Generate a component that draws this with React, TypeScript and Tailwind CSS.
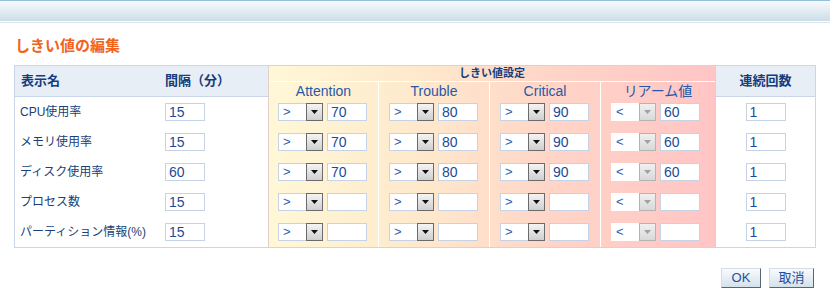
import React from 'react';

const rows = [
  { name: 'CPU使用率', interval: '15', values: ['70', '80', '90', '60'], count: '1' },
  { name: 'メモリ使用率', interval: '15', values: ['70', '80', '90', '60'], count: '1' },
  { name: 'ディスク使用率', interval: '60', values: ['70', '80', '90', '60'], count: '1' },
  { name: 'プロセス数', interval: '15', values: ['', '', '', ''], count: '1' },
  { name: 'パーティション情報(%)', interval: '15', values: ['', '', '', ''], count: '1' },
];

const levels = [
  { label: 'Attention', col: 'w-[109px] pl-[9px]', head: '-ml-[9px]', op: '>', disabled: false },
  { label: 'Trouble', col: 'w-[111px] pl-[10px] border-l border-white', head: '-ml-[10px]', op: '>', disabled: false },
  { label: 'Critical', col: 'w-[111px] pl-[10px] border-l border-white', head: '-ml-[10px]', op: '>', disabled: false },
  { label: 'リアーム値', col: 'w-[115px] pl-[10px] border-l border-white', head: '-ml-[10px]', op: '<', disabled: true },
];

function TextBox({ value }: { value: string }) {
  return (
    <div className="w-[40px] h-[18px] border border-[#c6d3e6] bg-white pl-[3px] text-[14px] leading-[16px] text-[#1d4a96]">
      {value}
    </div>
  );
}

function OpSelect({ op, disabled }: { op: string; disabled: boolean }) {
  return (
    <div
      className={`flex w-[45px] h-[18px] bg-white border ${
        disabled ? 'border-white' : 'border-[#c6d3e6]'
      }`}
    >
      <span className="flex-1 pl-[4px] text-[13px] leading-[16px] text-[#2a5db0]">{op}</span>
      <span
        className={`flex items-center justify-center w-[17px] h-[18px] -mt-px -mr-px border ${
          disabled
            ? 'border-[#b4b4b4] bg-[linear-gradient(#f0f0f0,#d8d8d8)]'
            : 'border-[#6b6b6b] bg-[linear-gradient(#f4f4f4,#cfcfcf)]'
        }`}
      >
        <svg width="7" height="4" viewBox="0 0 7 4">
          <path d="M0 0h7L3.5 4z" fill={disabled ? '#a0a0a0' : '#111'} />
        </svg>
      </span>
    </div>
  );
}

export default function App() {
  return (
    <div className="w-[830px] h-[304px] bg-white font-['Liberation_Sans','Noto_Sans_CJK_JP',sans-serif] text-[#1b3f78]">
      <div className="h-[21px] border-t border-[#93c1d9] bg-[linear-gradient(#f8fbfd,#ccdde8)]" />
      <div className="mt-px h-px bg-[#d9e4ec]" />

      <h1 className="ml-[15px] mt-[13px] text-[15px] leading-[20px] font-bold text-[#f0641e]">しきい値の編集</h1>

      <div className="ml-[14px] mt-[9px] w-[802px] flex border border-[#c9d5e8]">
        {/* 表示名 / 間隔 */}
        <div className="w-[253px] flex flex-col">
          <div className="flex h-[31px] items-center bg-[#e8eef6] border-b border-[#c9d5e8] text-[13px] font-bold text-[#163d7a]">
            <div className="w-[145px] pl-[6px]">表示名</div>
            <div className="pl-[5px]">間隔（分）</div>
          </div>
          {rows.map((r) => (
            <div key={r.name} className="flex h-[30px] items-center text-[12px]">
              <div className="w-[145px] pl-[5px]">{r.name}</div>
              <div className="pl-[5px]">
                <TextBox value={r.interval} />
              </div>
            </div>
          ))}
        </div>

        {/* しきい値設定 */}
        <div className="w-[448px] flex flex-col border-x border-[#e2cfc9] bg-[linear-gradient(to_right,#fff8d7,#fee8cc_35%,#ffd4c7_65%,#ffc5c5)]">
          <div className="h-[16px] border-b border-white flex items-center justify-center text-[11px] font-bold text-[#163d7a]">
            しきい値設定
          </div>
          <div className="flex flex-1">
            {levels.map((lv, i) => (
              <div key={lv.label} className={`flex flex-col ${lv.col}`}>
                <div className={`h-[15px] leading-[19px] text-center text-[14px] text-[#2a58a6] ${lv.head}`}>
                  {lv.label}
                </div>
                {rows.map((r) => (
                  <div key={r.name} className="flex h-[30px] items-center gap-[4px]">
                    <OpSelect op={lv.op} disabled={lv.disabled} />
                    <TextBox value={r.values[i]} />
                  </div>
                ))}
              </div>
            ))}
          </div>
        </div>

        {/* 連続回数 */}
        <div className="w-[99px] flex flex-col">
          <div className="h-[31px] flex items-center justify-center bg-[#e8eef6] border-b border-[#c9d5e8] text-[13px] font-bold text-[#163d7a]">
            連続回数
          </div>
          {rows.map((r) => (
            <div key={r.name} className="flex h-[30px] items-center justify-center">
              <TextBox value={r.count} />
            </div>
          ))}
        </div>
      </div>

      <div className="mt-[20px] mr-[16px] flex justify-end gap-[8px]">
        <button className="w-[40px] h-[20px] border border-[#d3dde8] border-r-[#566676] border-b-[#566676] bg-[linear-gradient(#f9fbfd,#d4e1ea)] text-[13px] leading-[16px] text-[#1f4fa0]">
          OK
        </button>
        <button className="w-[45px] h-[20px] border border-[#d3dde8] border-r-[#566676] border-b-[#566676] bg-[linear-gradient(#f9fbfd,#d4e1ea)] text-[13px] leading-[16px] text-[#1f4fa0]">
          取消
        </button>
      </div>
    </div>
  );
}
